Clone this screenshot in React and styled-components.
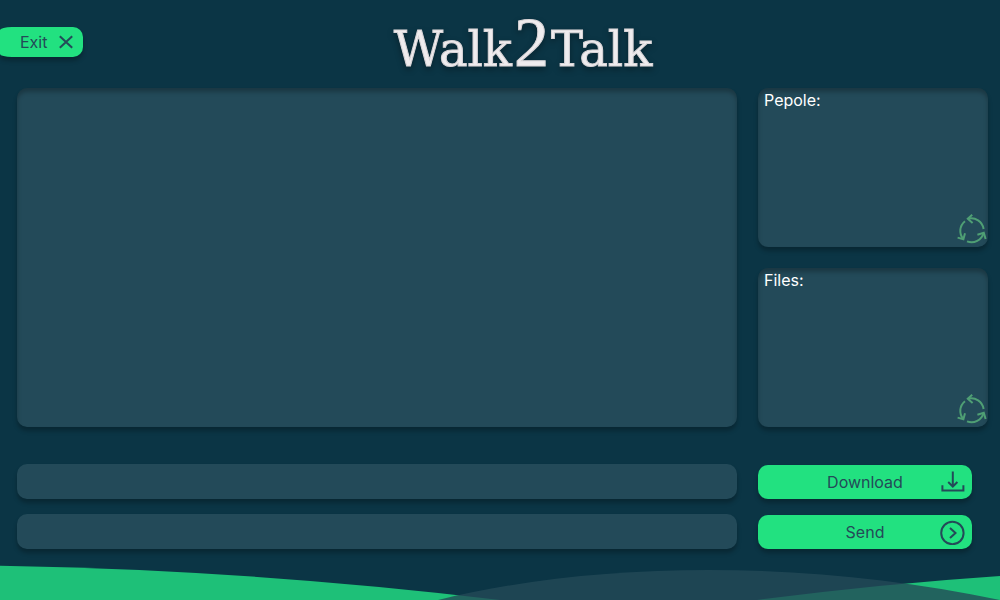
import React from "react";
import styled, { createGlobalStyle, css } from "styled-components";

const GlobalStyle = createGlobalStyle`
  *, *::before, *::after { box-sizing: border-box; }
  body {
    margin: 0;
    background: #0b3545;
    font-family: Inter, "Open Sans", sans-serif;
  }
  button, input { font: inherit; }
`;

const Page = styled.div`
  min-height: 100vh;
  display: flex;
  flex-direction: column;
`;

const Header = styled.header`
  display: grid;
  grid-template-columns: 1fr auto 1fr;
  align-items: start;
  height: 88px;
`;

const greenSurface = css`
  border: 0;
  background: #22e180;
  color: #244a58;
  font-size: 16px;
  line-height: 20px;
  box-shadow: 0 4px 4px rgba(0, 0, 0, 0.25);
  cursor: pointer;
`;

const ExitButton = styled.button`
  ${greenSurface}
  justify-self: start;
  display: flex;
  align-items: center;
  gap: 12px;
  height: 30px;
  margin-top: 27px;
  padding: 0 10px 0 20px;
  border-radius: 12px 10px 10px 12px / 3px 10px 10px 3px;
`;

const Logo = styled.h1`
  display: flex;
  align-items: baseline;
  margin: 0;
  padding: 8px 0 0 46px;
  height: 80px;
  font-family: "DejaVu Serif", serif;
  font-weight: 400;
  font-size: 48px;
  line-height: 70px;
  filter: drop-shadow(0 3px 3px rgba(0, 0, 0, 0.35));
`;

const LogoWord = styled.span`
  color: #efecee;
  -webkit-text-stroke: 1px #d8d4d7;
`;

const LogoDigit = styled(LogoWord)`
  padding: 0 2px;
  font-family: "Liberation Serif", serif;
  font-size: 70px;
`;

const Content = styled.main`
  display: grid;
  grid-template-columns: 1fr 230px;
  column-gap: 21px;
  row-gap: 37px;
  padding: 0 12px 0 17px;
`;

const panelSurface = css`
  background: #234a59;
  border-radius: 10px;
`;

const Panel = styled.section`
  ${panelSurface}
  display: flex;
  flex-direction: column;
  justify-content: space-between;
  min-height: 159px;
  padding: 0 1px 3px 6px;
  box-shadow: 0 4px 4px rgba(0, 0, 0, 0.25), inset 0 4px 4px rgba(0, 0, 0, 0.25);
`;

const Sidebar = styled.div`
  display: flex;
  flex-direction: column;
  gap: 21px;
`;

const PanelTitle = styled.h2`
  margin: 0;
  color: #ffffff;
  font-size: 16px;
  font-weight: 400;
  line-height: 24px;
`;

const RefreshButton = styled.button`
  align-self: flex-end;
  display: flex;
  padding: 0;
  border: 0;
  background: none;
  color: #4f9f74;
  cursor: pointer;
`;

const Fields = styled.div`
  display: flex;
  flex-direction: column;
  gap: 15px;
`;

const Field = styled.input`
  ${panelSurface}
  width: 100%;
  height: 35px;
  padding: 0 12px;
  border: 0;
  outline: 0;
  color: #ffffff;
  font-size: 16px;
  box-shadow: 0 4px 4px rgba(0, 0, 0, 0.25);
`;

const Actions = styled.div`
  display: flex;
  flex-direction: column;
  gap: 16px;
  padding: 1px 16px 0 0;
`;

const ActionButton = styled.button`
  ${greenSurface}
  display: grid;
  grid-template-columns: 26px 1fr 26px;
  align-items: center;
  height: 34px;
  padding: 0 6px;
  border-radius: 10px;
`;

const ActionLabel = styled.span`
  grid-column: 2;
  text-align: center;
`;

const Waves = styled.footer`
  margin-top: auto;
  height: 35px;

  svg {
    display: block;
    width: 100%;
    height: 100%;
  }
`;

const CloseIcon = () => (
  <svg width="14" height="14" viewBox="0 0 14 14" fill="none" stroke="currentColor" strokeWidth="2" aria-hidden="true">
    <path d="M.8 1.2 13.2 12.8M13.2 1.2 .8 12.8" />
  </svg>
);

const CycleIcon = () => (
  <svg width="30" height="30" viewBox="0 0 30 30" fill="none" stroke="currentColor" strokeWidth="2" aria-hidden="true">
    <path d="M11 4.8A12.5 12.5 0 0 1 26.6 15" />
    <path d="M15.2 .8 10.8 4.8 15.6 9" />
    <path d="M8 7.2A12.5 12.5 0 0 0 6.2 25" />
    <path d="M.6 23.6 6.4 25.2 8 19.2" />
    <path d="M10 27.4A12.5 12.5 0 0 0 26.6 19" />
    <path d="M20.4 20.8 26.8 18.8 28.6 25" />
  </svg>
);

const DownloadIcon = () => (
  <svg width="26" height="26" viewBox="0 0 26 26" fill="none" stroke="currentColor" strokeWidth="2" aria-hidden="true">
    <path d="M12.8 2.5v15M8.2 13l4.6 4.5 4.6-4.5M2.4 16.2v5.4h21v-5.4" />
  </svg>
);

const SendIcon = () => (
  <svg width="26" height="26" viewBox="0 0 26 26" fill="none" stroke="currentColor" strokeWidth="2" aria-hidden="true">
    <circle cx="12.4" cy="14" r="11.2" />
    <path d="m10 9 5.5 5-5.5 5" />
  </svg>
);

export default function App() {
  return (
    <>
      <GlobalStyle />
      <Page>
        <Header>
          <ExitButton type="button">
            Exit
            <CloseIcon />
          </ExitButton>
          <Logo>
            <LogoWord>Walk</LogoWord>
            <LogoDigit>2</LogoDigit>
            <LogoWord>Talk</LogoWord>
          </Logo>
        </Header>
        <Content>
          <Panel aria-label="Messages" />
          <Sidebar>
            <Panel>
              <PanelTitle>Pepole:</PanelTitle>
              <RefreshButton type="button" aria-label="Refresh people">
                <CycleIcon />
              </RefreshButton>
            </Panel>
            <Panel>
              <PanelTitle>Files:</PanelTitle>
              <RefreshButton type="button" aria-label="Refresh files">
                <CycleIcon />
              </RefreshButton>
            </Panel>
          </Sidebar>
          <Fields>
            <Field type="text" aria-label="File name" />
            <Field type="text" aria-label="Message" />
          </Fields>
          <Actions>
            <ActionButton type="button">
              <ActionLabel>Download</ActionLabel>
              <DownloadIcon />
            </ActionButton>
            <ActionButton type="button">
              <ActionLabel>Send</ActionLabel>
              <SendIcon />
            </ActionButton>
          </Actions>
        </Content>
        <Waves>
          <svg viewBox="0 0 1000 35" preserveAspectRatio="none" aria-hidden="true">
            <path d="M0 .8Q250 5 500 35H0z" fill="#1ec078" />
            <path d="M757 35Q880 19 1000 11V35z" fill="#1ec078" />
            <path d="M438 35C600-5 810-5 1000 35z" fill="#244a58" fillOpacity="0.79" />
          </svg>
        </Waves>
      </Page>
    </>
  );
}
